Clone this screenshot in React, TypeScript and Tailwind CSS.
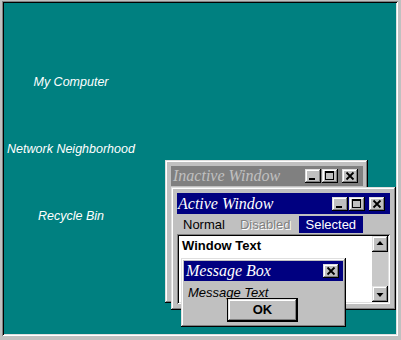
import React from "react";

// win95 bevels
const RAISED =
  "shadow-[inset_-1px_-1px_#000,inset_1px_1px_#dfdfdf,inset_-2px_-2px_#808080,inset_2px_2px_#fff]";
const SUNKEN =
  "shadow-[inset_1px_1px_#808080,inset_-1px_-1px_#fff,inset_2px_2px_#000,inset_-2px_-2px_#dfdfdf]";

function CapButton({ kind }: { kind: "min" | "max" | "close" }) {
  return (
    <span className={`flex h-[14px] w-[16px] items-center justify-center bg-[#c0c0c0] ${RAISED}`}>
      <svg width="16" height="14" viewBox="0 0 16 14" className="block">
        {kind === "min" && <rect x="4" y="9" width="6" height="2" fill="#000" />}
        {kind === "max" && (
          <>
            <rect x="3.5" y="2.5" width="8" height="8" fill="none" stroke="#000" />
            <rect x="3" y="2" width="9" height="2" fill="#000" />
          </>
        )}
        {kind === "close" && (
          <path d="M4.5 3.5 L11.5 10.5 M11.5 3.5 L4.5 10.5" stroke="#000" strokeWidth="1.8" />
        )}
      </svg>
    </span>
  );
}

function TitleButtons() {
  return (
    <div className="flex items-center">
      <CapButton kind="min" />
      <span className="ml-[1px]">
        <CapButton kind="max" />
      </span>
      <span className="ml-[4px]">
        <CapButton kind="close" />
      </span>
    </div>
  );
}

function ScrollButton({ up }: { up?: boolean }) {
  return (
    <span className={`flex h-[16px] w-[16px] shrink-0 items-center justify-center bg-[#c0c0c0] ${RAISED}`}>
      <svg width="16" height="16" viewBox="0 0 16 16" className="block">
        {up ? (
          <polygon points="8,5 4.5,9 11.5,9" fill="#000" />
        ) : (
          <polygon points="4.5,7 11.5,7 8,11" fill="#000" />
        )}
      </svg>
    </span>
  );
}

export default function App() {
  return (
    <div className="h-[340px] w-[401px] overflow-hidden bg-[#c0c0c0] pl-[2px] pt-[1px] [font-family:'Liberation_Sans',Arial,sans-serif]">
      <div className={`h-[335px] w-[396px] bg-[#008080] p-[2px] ${SUNKEN}`}>
        <div className="relative h-full w-full overflow-hidden">
          {/* desktop icon labels */}
          <div className="flex w-[134px] flex-col items-center gap-[52px] pt-[72px] text-[12.5px] italic leading-[15px] text-white">
            <span>My Computer</span>
            <span className="whitespace-nowrap">Network Neighborhood</span>
            <span>Recycle Bin</span>
          </div>

          {/* inactive window */}
          <div className={`absolute left-[161px] top-[157px] h-[143px] w-[203px] bg-[#c0c0c0] pl-[6px] pr-[5px] pt-[6px] ${RAISED}`}>
            <div className="flex h-[20px] items-center justify-between bg-[#808080] pl-[2px] pr-[5px]">
              <span className="text-[16px] italic leading-none text-[#c0c0c0] [font-family:'Liberation_Serif','Times_New_Roman',serif]">
                Inactive Window
              </span>
              <TitleButtons />
            </div>
          </div>

          {/* active window */}
          <div className={`absolute left-[167px] top-[184px] h-[123px] w-[225px] bg-[#c0c0c0] px-[6px] pt-[6px] ${RAISED}`}>
            <div className="flex h-[21px] items-center justify-between bg-[#000080] pl-[1px] pr-[5px]">
              <span className="text-[16px] italic leading-none text-white [font-family:'Liberation_Serif','Times_New_Roman',serif]">
                Active Window
              </span>
              <TitleButtons />
            </div>
            <div className="mt-[2px] flex h-[17px] items-center text-[13px] leading-[17px] text-black">
              <span className="ml-[6px]">Normal</span>
              <span className="ml-[15px] text-[#808080] [text-shadow:1px_1px_0_#fff]">Disabled</span>
              <span className="ml-[8px] bg-[#000080] px-[7px] text-white">Selected</span>
            </div>
            <div className={`mt-[1px] flex h-[70px] bg-white p-[2px] ${SUNKEN}`}>
              <div className="flex-1 pl-[3px] pt-[2px] text-[13px] font-bold leading-[16px] text-black">
                Window Text
              </div>
              <div className="flex w-[16px] flex-col bg-[#c8c8c8]">
                <ScrollButton up />
                <div className="flex-1" />
                <ScrollButton />
              </div>
            </div>
          </div>

          {/* message box */}
          <div className={`absolute left-[177px] top-[255px] h-[69px] w-[165px] bg-[#c0c0c0] p-[3px] ${RAISED}`}>
            <div className="flex h-[20px] items-center justify-between bg-[#000080] pl-[2px] pr-[4px]">
              <span className="text-[16px] italic leading-none text-white [font-family:'Liberation_Serif','Times_New_Roman',serif]">
                Message Box
              </span>
              <CapButton kind="close" />
            </div>
            <div className="mt-[4px] pl-[4px] text-[13px] italic leading-[16px] text-black">Message Text</div>
            <div className="relative ml-[43px] mt-[-3px] h-[24px] w-[71px] border border-black bg-[#c0c0c0]">
              <div className={`flex h-full w-full items-center justify-center text-[13px] font-bold text-black ${RAISED}`}>
                OK
              </div>
            </div>
          </div>
        </div>
      </div>
    </div>
  );
}
